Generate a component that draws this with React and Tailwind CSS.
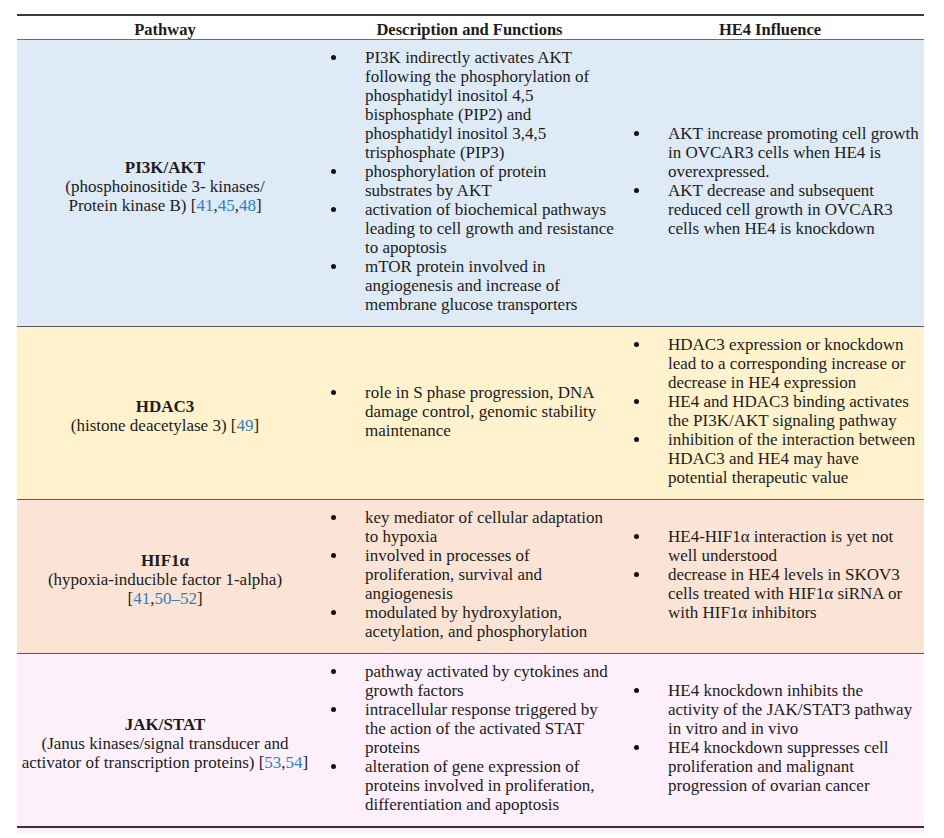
import React from 'react';

const Ref = ({ children }) => <span className="text-[#2f7fc1]">{children}</span>;

const rows = [
  {
    bg: 'bg-[#deeaf6]',
    name: 'PI3K/AKT',
    sub: [
      '(phosphoinositide 3- kinases/',
      <>Protein kinase B) [<Ref>41</Ref>,<Ref>45</Ref>,<Ref>48</Ref>]</>,
    ],
    desc: [
      ['PI3K indirectly activates AKT', 'following the phosphorylation of', 'phosphatidyl inositol 4,5', 'bisphosphate (PIP2) and', 'phosphatidyl inositol 3,4,5', 'trisphosphate (PIP3)'],
      ['phosphorylation of protein', 'substrates by AKT'],
      ['activation of biochemical pathways', 'leading to cell growth and resistance', 'to apoptosis'],
      ['mTOR protein involved in', 'angiogenesis and increase of', 'membrane glucose transporters'],
    ],
    influence: [
      ['AKT increase promoting cell growth', 'in OVCAR3 cells when HE4 is', 'overexpressed.'],
      ['AKT decrease and subsequent', 'reduced cell growth in OVCAR3', 'cells when HE4 is knockdown'],
    ],
  },
  {
    bg: 'bg-[#fff2cc]',
    name: 'HDAC3',
    sub: [<>(histone deacetylase 3) [<Ref>49</Ref>]</>],
    desc: [['role in S phase progression, DNA', 'damage control, genomic stability', 'maintenance']],
    influence: [
      ['HDAC3 expression or knockdown', 'lead to a corresponding increase or', 'decrease in HE4 expression'],
      ['HE4 and HDAC3 binding activates', 'the PI3K/AKT signaling pathway'],
      ['inhibition of the interaction between', 'HDAC3 and HE4 may have', 'potential therapeutic value'],
    ],
  },
  {
    bg: 'bg-[#fbe4d5]',
    name: 'HIF1α',
    sub: ['(hypoxia-inducible factor 1-alpha)', <>[<Ref>41</Ref>,<Ref>50–52</Ref>]</>],
    desc: [
      ['key mediator of cellular adaptation', 'to hypoxia'],
      ['involved in processes of', 'proliferation, survival and', 'angiogenesis'],
      ['modulated by hydroxylation,', 'acetylation, and phosphorylation'],
    ],
    influence: [
      ['HE4-HIF1α interaction is yet not', 'well understood'],
      ['decrease in HE4 levels in SKOV3', 'cells treated with HIF1α siRNA or', 'with HIF1α inhibitors'],
    ],
  },
  {
    bg: 'bg-[#fdf0fb]',
    name: 'JAK/STAT',
    sub: ['(Janus kinases/signal transducer and', <>activator of transcription proteins) [<Ref>53</Ref>,<Ref>54</Ref>]</>],
    desc: [
      ['pathway activated by cytokines and', 'growth factors'],
      ['intracellular response triggered by', 'the action of the activated STAT', 'proteins'],
      ['alteration of gene expression of', 'proteins involved in proliferation,', 'differentiation and apoptosis'],
    ],
    influence: [
      ['HE4 knockdown inhibits the', 'activity of the JAK/STAT3 pathway', 'in vitro and in vivo'],
      ['HE4 knockdown suppresses cell', 'proliferation and malignant', 'progression of ovarian cancer'],
    ],
  },
];

const BulletList = ({ items }) => (
  <div className="flex flex-col">
    {items.map((lines, i) => (
      <div key={i} className="flex">
        <div className="w-[52px] shrink-0 pl-[18px] h-[19px] flex items-center">
          <span className="w-[5px] h-[5px] rounded-full bg-[#111]" />
        </div>
        <div className="whitespace-nowrap">
          {lines.map((l, j) => (
            <div key={j}>{l}</div>
          ))}
        </div>
      </div>
    ))}
  </div>
);

export default function App() {
  return (
    <div className="min-h-screen bg-white pt-[14px] pl-[17px] pr-[20px] text-[#1c1c1c] text-[17px] leading-[19px]" style={{ fontFamily: '"Liberation Serif", serif' }}>
      <div className="border-t-2 border-[#3a3a3a]">
        {/* header */}
        <div className="grid grid-cols-[296px_303px_308px] h-[24px] pt-[3px] items-center font-bold text-[16.5px] border-b border-[#6b6b6b]">
          <div className="text-center">Pathway</div>
          <div className="text-center pl-[10px]">Description and Functions</div>
          <div className="text-center">HE4 Influence</div>
        </div>

        {rows.map((r, i) => (
          <div
            key={r.name}
            className={`grid grid-cols-[296px_303px_308px] items-center pt-[8px] pb-[12px] ${r.bg} ${i === rows.length - 1 ? 'border-b-2 border-[#333]' : 'border-b border-[#5a5a5a]'}`}
          >
            <div className="text-center whitespace-nowrap pt-[10px]">
              <div className="font-bold">{r.name}</div>
              {r.sub.map((s, j) => (
                <div key={j}>{s}</div>
              ))}
            </div>
            <BulletList items={r.desc} />
            <BulletList items={r.influence} />
          </div>
        ))}
        <div className="h-[5px] bg-[#fdf0fb]" />
      </div>
    </div>
  );
}
